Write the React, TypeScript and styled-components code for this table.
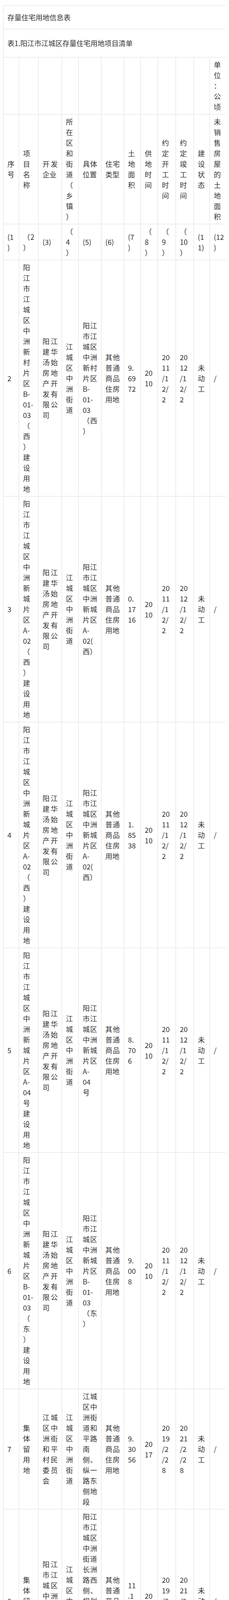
import styled, { createGlobalStyle } from "styled-components";

const GlobalStyle = createGlobalStyle`
    html {
        -webkit-text-size-adjust: 100%;
        text-size-adjust: 100%;
    }
    body {
        margin: 8px 8px 0;
        background: #fff;
        color: #333;
        font-family: "Noto Sans CJK SC", sans-serif;
    }
`

const Page = styled.div`
    width: 579px;
`

const Table = styled.table`
    margin-top: 5px;
    width: 578px;
    table-layout: fixed;
    border-collapse: collapse;
    font-family: "Noto Sans CJK SC", sans-serif;
`

const Cell = styled.td<{ $pr?: number }>`
    border: 1px solid #ddd;
    padding: 5px ${(p) => p.$pr ?? 10}px 5px 10px;
    font-size: 18px;
    line-height: 27px;
    text-align: justify;
    vertical-align: middle;
    word-break: normal;
    overflow-wrap: break-word;
    text-spacing-trim: space-all;
`

const TitleCell = styled.td<{ $height: number }>`
    border: 1px solid #ddd;
    height: ${(p) => p.$height}px;
    padding: 0 10px;
    box-sizing: border-box;
    font-size: 18px;
    line-height: 27px;
    vertical-align: middle;
`

const Divider = styled.div`
    margin-top: 84px;
    border-top: 1px solid #ddd;
`

const FooterBand = styled.div`
    margin: 23px 0 0 -8px;
    width: 587px;
    height: 12px;
    background: #f5f5f5;
`

const columns = [
    { w: 40, pr: 11 },
    { w: 50, pr: 10 },
    { w: 60, pr: 10 },
    { w: 43, pr: 10 },
    { w: 58, pr: 10 },
    { w: 58, pr: 10 },
    { w: 43, pr: 11.5 },
    { w: 44, pr: 10 },
    { w: 46, pr: 14 },
    { w: 46, pr: 14 },
    { w: 41, pr: 10 },
    { w: 49, pr: 10 },
]

const headRows = [
    ["", "", "", "", "", "", "", "", "", "", "", "单位：公顷"],
    ["序号", "项目名称", "开发企业", "所在区和街道（乡镇）", "具体位置", "住宅类型", "土地面积", "供地时间", "约定开工时间", "约定竣工时间", "建设状态", "未销售房屋的土地面积"],
    ["(1)", "（2）", "(3)", "（4）", "(5)", "(6)", "(7)", "（8）", "（9）", "（10）", "(11)", "(12)"],
]

const dev = "阳江建华汤始房地产开发有限公司"
const zz = "江城区中洲街道"
const cb = "江城区城北街道"
const bs = "江城区白沙街道"
const ptype = "其他普通商品住房用地"
const ctype = "城镇住宅-普通商品住房用地"
const jt = "集体留用地"

const rows = [
    ["2", "阳江市江城区中洲新村片区B-01-03（西）建设用地", dev, zz, "阳江市江城区中洲新村片区B-01-03（西）", ptype, "9.6972", "2010", "2011/12/2", "2012/12/2", "未动工", "/"],
    ["3", "阳江市江城区中洲新城片区A-02（西）建设用地", dev, zz, "阳江市江城区中洲新城片区A-02(西）", ptype, "0.1716", "2010", "2011/12/2", "2012/12/2", "未动工", "/"],
    ["4", "阳江市江城区中洲新城片区A-02（西）建设用地", dev, zz, "阳江市江城区中洲新城片区A-02(西）", ptype, "1.8538", "2010", "2011/12/2", "2012/12/2", "未动工", "/"],
    ["5", "阳江市江城区中洲新城片区A-04号建设用地", dev, zz, "阳江市江城区中洲新城片区A-04号", ptype, "8.706", "2010", "2011/12/2", "2012/12/2", "未动工", "/"],
    ["6", "阳江市江城区中洲新城片区B-01-03（东）建设用地", dev, zz, "阳江市江城区中洲新城片区B-01-03（东）", ptype, "9.008", "2010", "2011/12/2", "2012/12/2", "未动工", "/"],
    ["7", jt, "江城区中洲街和平村民委员会", zz, "江城区中洲街道和平路南侧、纵一路东侧地段", ptype, "9.3056", "2017", "2019/2/28", "2021/2/28", "未动工", "/"],
    ["8", jt, "阳江市江城区中洲街西岸村民委员会", zz, "阳江市江城区中洲街道长洲路西侧、规划横二路、规划横三路南北两侧地段", ptype, "11.1928", "2017", "2019/6/11", "2021/2/28", "未动工", "/"],
    ["9", jt, "阳江市江城区南恩街三江村民委员会", zz, "市区三江岛三江中路西侧", ptype, "1.1152", "2016", "2017/8/2", "2019/8/2", "未动工", "/"],
    ["10", jt, "阳江市江城区城北街萍郊村谭郊新村经济合作社", cb, "阳江市江城区西平北路以东、20米路北侧地段", ptype, "0.99", "2019", "2020/11/26", "2022/11/26", "未动工", "/"],
    ["11", jt, "江城区坪郊村民委员", cb, "阳江市市区康泰路西侧、二十米规划路北地段", ptype, "0.452", "2016", "2017/12/29", "2019/12/29", "未动工", "/"],
    ["12", jt, "江城区城北街坪郊村民委员会", cb, "阳江市市区石湾北路东\\12米规划路南", ptype, "1.1345", "2016", "2020/7/13", "2022/7/13", "未动工", "/"],
    ["13", jt, "阳江市江城区白沙街六村旧寨经济合作社", bs, "阳江市江城银岭科技产业园A3.2-2", ctype, "2.6412", "2019", "2020/1/29", "2020/7/29", "未动工", "/"],
    ["14", jt, "阳江市江城区白沙街六村新碑经济合作社", bs, "阳江市江城银岭科技产业园B3.2-5", ctype, "4.3578", "2019", "2020/12/25", "2022/12/25", "未动工", "/"],
]

const App = () => {
    return <>
        <GlobalStyle />
        <Page>
            <Table>
                <colgroup>
                    {columns.map((c, i) => <col key={i} style={{ width: c.w }} />)}
                </colgroup>
                <tbody>
                    <tr>
                        <TitleCell colSpan={12} $height={61}>存量住宅用地信息表</TitleCell>
                    </tr>
                    <tr>
                        <TitleCell colSpan={12} $height={72}>表1.阳江市江城区存量住宅用地项目清单</TitleCell>
                    </tr>
                    {[...headRows, ...rows].map((row, r) => (
                        <tr key={r}>
                            {row.map((text, i) => (
                                <Cell key={i} $pr={columns[i].pr}>{text}</Cell>
                            ))}
                        </tr>
                    ))}
                    <tr>
                        <Cell $pr={columns[0].pr}></Cell>
                        <Cell colSpan={5}>合计</Cell>
                        <Cell $pr={columns[6].pr}>60.6257</Cell>
                        <Cell></Cell>
                        <Cell></Cell>
                        <Cell></Cell>
                        <Cell></Cell>
                        <Cell></Cell>
                    </tr>
                </tbody>
            </Table>
            <Divider />
        </Page>
        <FooterBand />
    </>
}

export default App;
